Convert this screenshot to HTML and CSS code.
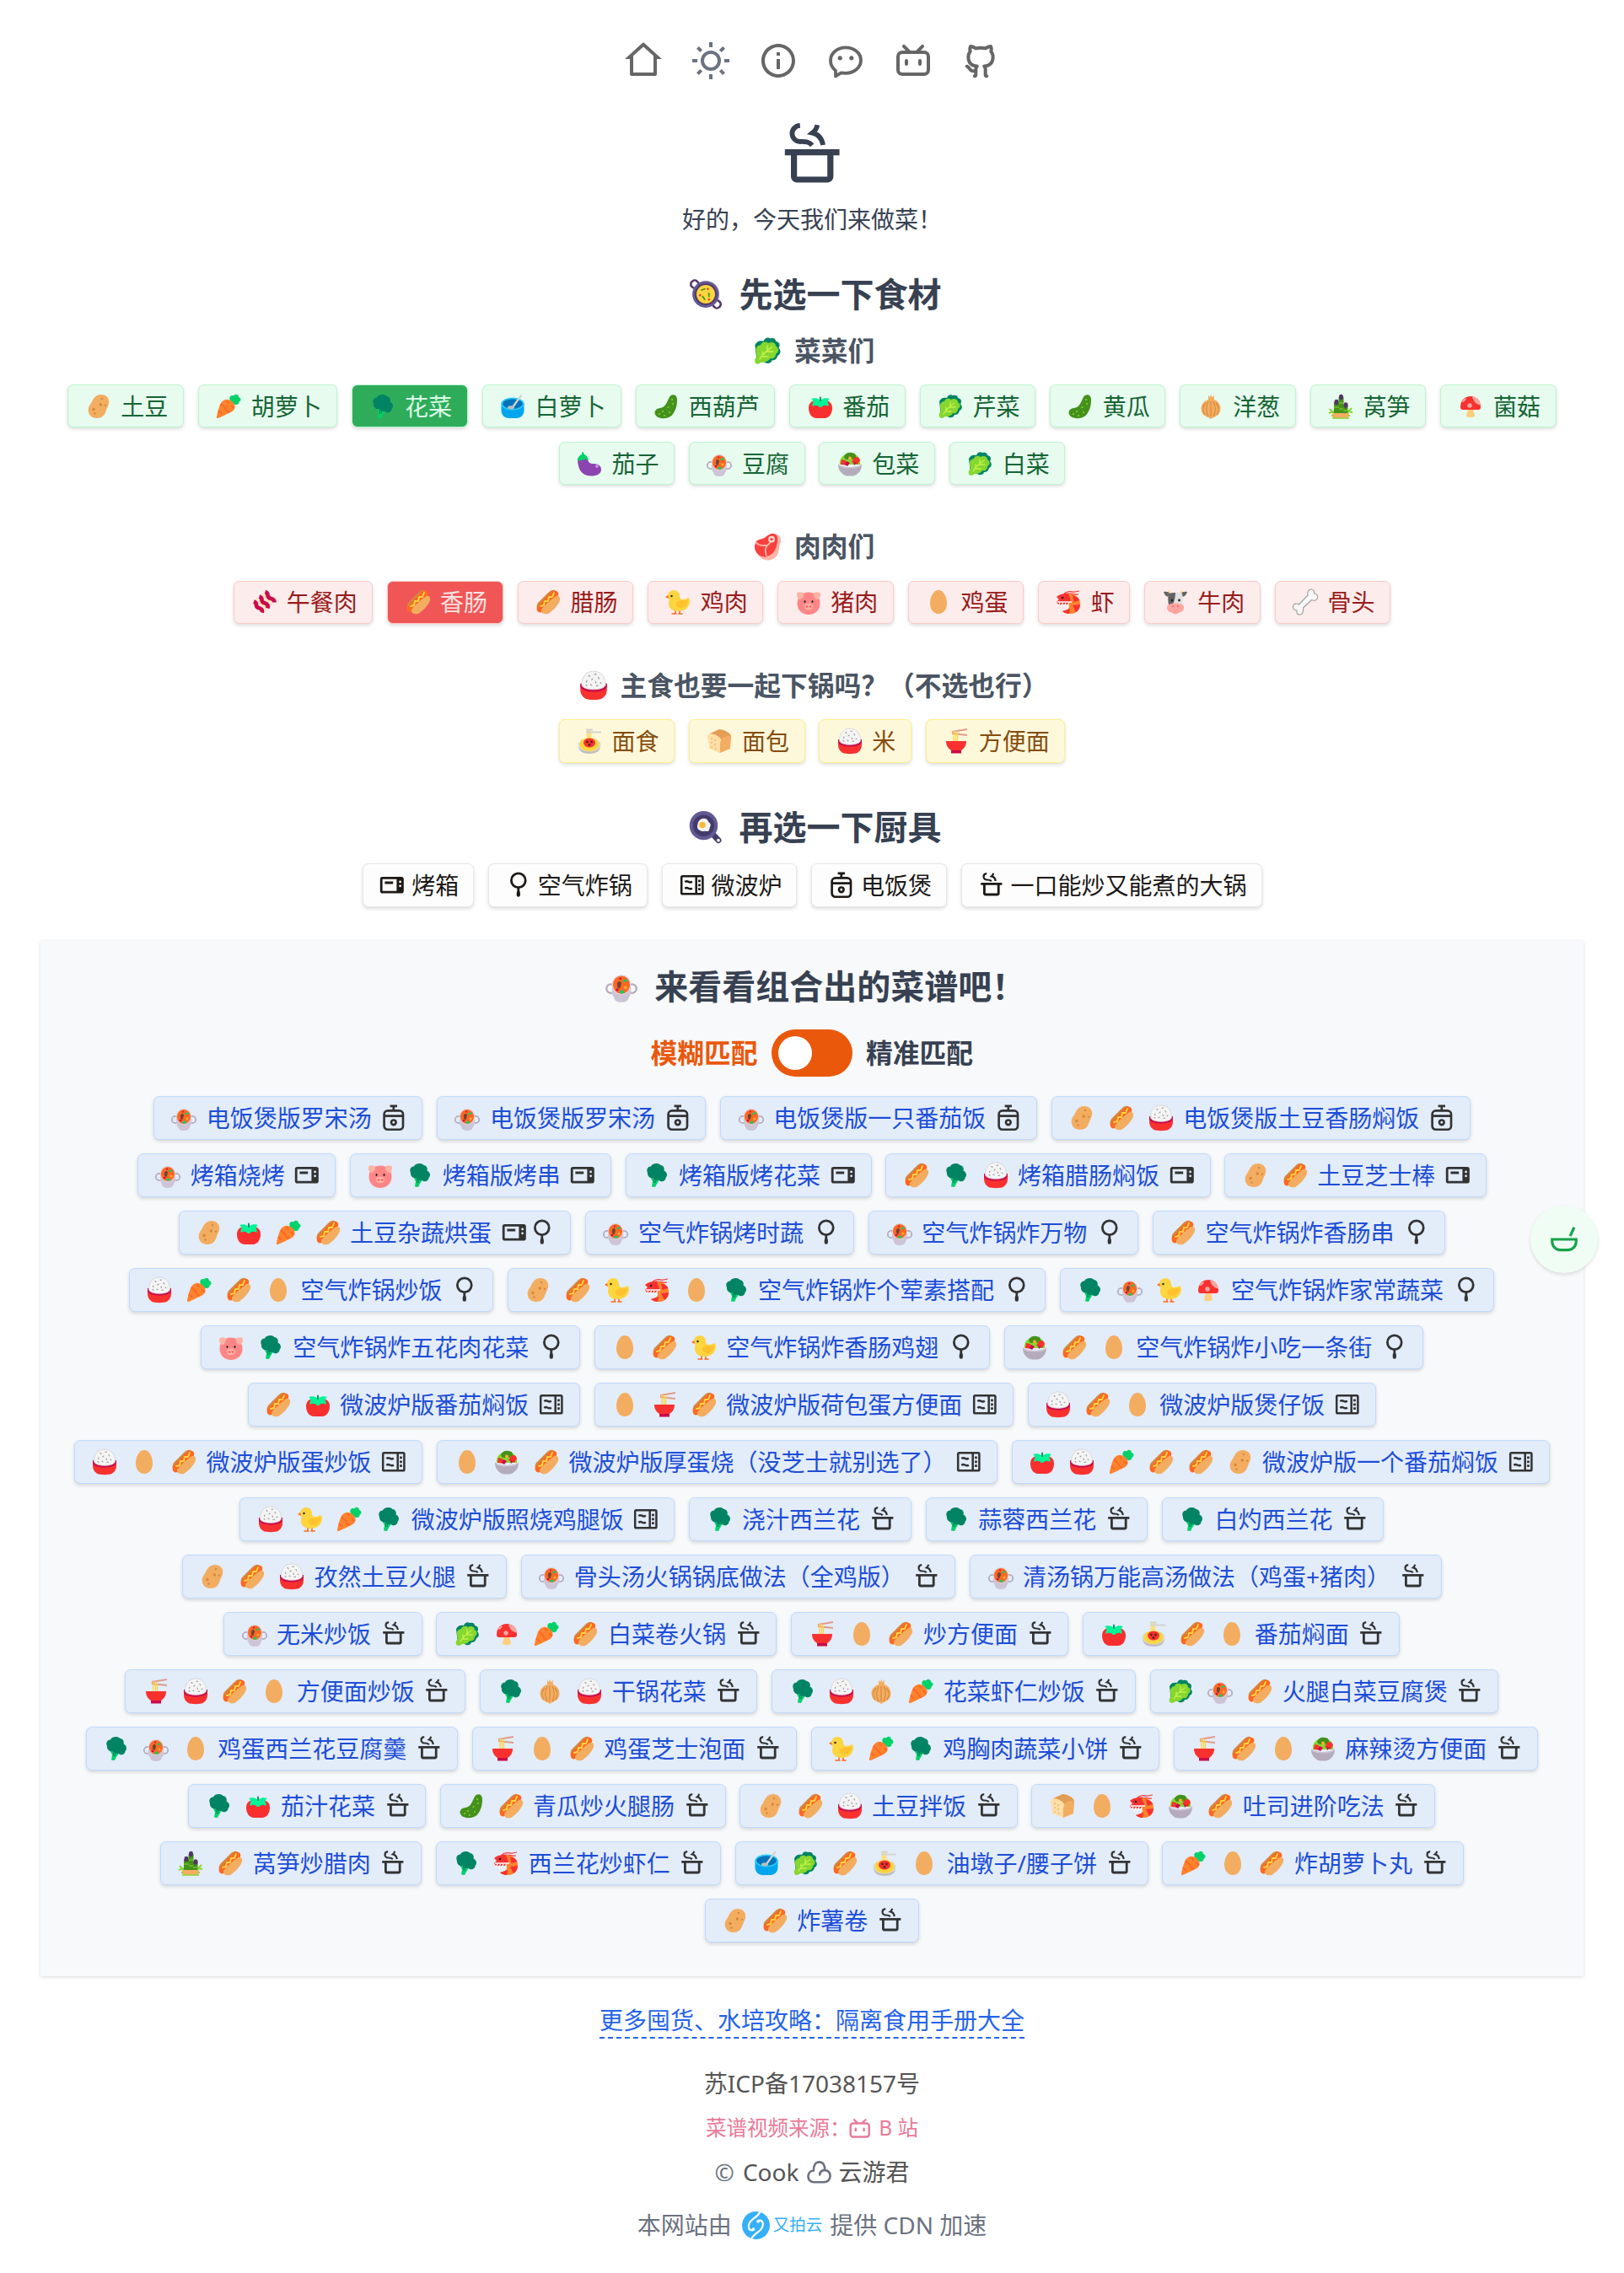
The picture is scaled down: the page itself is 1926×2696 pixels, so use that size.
FILE: index.html
```html
<!DOCTYPE html>
<html lang="zh-CN">
<head>
<meta charset="utf-8">
<title>好的，今天我们来做菜！</title>
<link rel="stylesheet" href="styles.css">
</head>
<body>
<svg class="sprite" aria-hidden="true">
  <symbol id="home" viewBox="0 0 24 24"><path fill="currentColor" d="M19 21H5a1 1 0 0 1-1-1v-9H1l10.327-9.388a1 1 0 0 1 1.346 0L23 11h-3v9a1 1 0 0 1-1 1zM6 19h12V9.158l-6-5.454-6 5.454V19z"/></symbol>
  <symbol id="sun" viewBox="0 0 24 24"><path fill="currentColor" d="M12 18a6 6 0 1 1 0-12 6 6 0 0 1 0 12zm0-2a4 4 0 1 0 0-8 4 4 0 0 0 0 8zM11 1h2v3h-2V1zm0 19h2v3h-2v-3zM3.515 4.929l1.414-1.414L7.05 5.636 5.636 7.05 3.515 4.93zM16.95 18.364l1.414-1.414 2.121 2.121-1.414 1.414-2.121-2.121zm2.121-14.85l1.414 1.415-2.121 2.121-1.414-1.414 2.121-2.121zM5.636 16.95l1.414 1.414-2.121 2.121-1.414-1.414 2.121-2.121zM23 11v2h-3v-2h3zM4 11v2H1v-2h3z"/></symbol>
  <symbol id="info" viewBox="0 0 24 24"><path fill="currentColor" d="M12 22C6.477 22 2 17.523 2 12S6.477 2 12 2s10 4.477 10 10-4.477 10-10 10zm0-2a8 8 0 1 0 0-16 8 8 0 0 0 0 16zM11 7h2v2h-2V7zm0 4h2v6h-2v-6z"/></symbol>
  <symbol id="wechat" viewBox="0 0 24 24"><path fill="none" stroke="currentColor" stroke-width="1.9" stroke-linejoin="round" d="M6 21.200V17.900C4.100 16.400 3 14.300 3 11.900 3 7.500 7 4.200 12 4.200s9 3.300 9 7.500-4 7.700-9 7.700c-1 0-1.800-.1-2.700-.2z"/><circle cx="8.600" cy="10.400" r="1.300" fill="currentColor"/><circle cx="15.400" cy="10.400" r="1.300" fill="currentColor"/></symbol>
  <symbol id="bili" viewBox="0 0 24 24"><path fill="currentColor" d="M7.172 2.757L10.414 6h3.171l3.243-3.242a1 1 0 1 1 1.415 1.415L16.414 6H18.500A3.500 3.500 0 0 1 22 9.500v8a3.500 3.500 0 0 1-3.500 3.500h-13A3.500 3.500 0 0 1 2 17.500v-8A3.500 3.500 0 0 1 5.500 6h2.085L5.757 4.171a1 1 0 0 1 1.415-1.415zM18.500 8h-13a1.500 1.500 0 0 0-1.493 1.356L4 9.500v8a1.500 1.500 0 0 0 1.356 1.493L5.500 19h13a1.500 1.500 0 0 0 1.493-1.355L20 17.500v-8A1.500 1.500 0 0 0 18.500 8zM8 11a1 1 0 0 1 1 1v2a1 1 0 0 1-2 0v-2a1 1 0 0 1 1-1zm8 0a1 1 0 0 1 1 1v2a1 1 0 0 1-2 0v-2a1 1 0 0 1 1-1z"/></symbol>
  <symbol id="github" viewBox="0 0 24 24"><path fill="currentColor" d="M5.883 18.653c-.3-.2-.558-.455-.86-.816a50.320 50.320 0 0 1-.466-.579c-.463-.575-.755-.84-1.057-.949a1 1 0 0 1 .676-1.883c.752.27 1.261.735 1.947 1.588-.094-.117.34.427.433.539.19.227.33.365.44.438.204.137.587.196 1.150.14.023-.382.094-.753.202-1.095C5.380 15.310 3.700 13.396 3.700 9.640c0-1.240.37-2.356 1.058-3.292-.218-.894-.185-1.975.302-3.192a1 1 0 0 1 .63-.582c.081-.024.127-.035.208-.047.803-.123 1.937.17 3.415 1.096A11.731 11.731 0 0 1 12 3.315c.912 0 1.818.104 2.684.308 1.477-.933 2.613-1.226 3.422-1.096.085.013.157.03.218.05a1 1 0 0 1 .616.58c.487 1.216.52 2.297.302 3.190.691.936 1.058 2.045 1.058 3.293 0 3.757-1.674 5.665-4.642 6.392.125.415.19.879.19 1.380a300.492 300.492 0 0 1-.012 2.716 1 1 0 0 1-.019 1.958c-1.139.228-1.983-.532-1.983-1.525l.002-.446.005-.705c.005-.708.007-1.338.007-1.998 0-.697-.183-1.152-.425-1.360-.661-.57-.326-1.655.54-1.752 2.967-.333 4.337-1.482 4.337-4.660 0-.955-.312-1.744-.913-2.404a1 1 0 0 1-.19-1.045c.166-.414.237-.957.096-1.614l-.01.003c-.491.139-1.110.44-1.858.949a1 1 0 0 1-.833.135A9.626 9.626 0 0 0 12 5.315c-.89 0-1.772.119-2.592.35a1 1 0 0 1-.83-.134c-.752-.507-1.374-.807-1.868-.947-.144.653-.073 1.194.092 1.607a1 1 0 0 1-.189 1.045C6.016 7.890 5.700 8.694 5.700 9.640c0 3.172 1.371 4.328 4.322 4.660.865.097 1.201 1.177.544 1.748-.192.168-.429.732-.429 1.364v3.150c0 .986-.835 1.725-1.960 1.528a1 1 0 0 1-.04-1.962v-.99c-.91.061-1.662-.088-2.254-.485z"/></symbol>
  <symbol id="pot" viewBox="0 0 24 24"><path fill="currentColor" fill-rule="evenodd" d="M3 10h18v2h-2v7a2 2 0 0 1-2 2H7a2 2 0 0 1-2-2v-7H3zM7 12v7h10v-7z"/><path fill="none" stroke="currentColor" stroke-width="1.600" d="M8 2.200C6.500 2.300 5.400 3.400 5.400 4.800c0 1.600 1.200 2.700 2.700 2.700 1.600 0 2.800-.1 3.900 1.200M13.700 2c-.2 1.100-.7 1.900-1.600 2.600 2 .4 3.100 1.900 3.500 4"/></symbol>
  <symbol id="oven" viewBox="0 0 24 24"><path fill="currentColor" fill-rule="evenodd" d="M4 5h16a2 2 0 0 1 2 2v10a2 2 0 0 1-2 2H4a2 2 0 0 1-2-2V7a2 2 0 0 1 2-2zM4 7v10h12V7zM19 8.200a1 1 0 1 0 0 2 1 1 0 0 0 0-2zM19 11.700a1 1 0 1 0 0 2 1 1 0 0 0 0-2z"/><path fill="currentColor" d="M6 9h7v2H6z"/></symbol>
  <symbol id="fryer" viewBox="0 0 24 24"><circle cx="12" cy="8" r="6" fill="none" stroke="currentColor" stroke-width="2"/><path d="M12 14v5" stroke="currentColor" stroke-width="2"/><rect x="10.500" y="17" width="3" height="5" rx="1.500" fill="currentColor"/></symbol>
  <symbol id="micro" viewBox="0 0 24 24"><g fill="none" stroke="currentColor" stroke-width="1.800"><rect x="3" y="4.500" width="18" height="15" rx="1"/><path d="M15.500 4.500v15M6 9.400c1-1 2-.8 3-.2s2 .6 3-.2M6 15c1-1 2-.8 3-.2s2 .6 3-.2"/></g><path fill="currentColor" d="M17.200 7.500h2v2h-2zM17.200 11h2v2h-2zM17.200 14.500h2v2h-2z"/></symbol>
  <symbol id="cooker" viewBox="0 0 24 24"><g fill="none" stroke="currentColor" stroke-width="1.900"><rect x="4" y="6" width="16" height="16" rx="3"/><path d="M4 10.500h16M12 6V2M9 2h6"/><circle cx="12" cy="15.900" r="2"/></g></symbol>
  <symbol id="bowlmix" viewBox="0 0 24 24"><path fill="none" stroke="currentColor" stroke-width="2" d="M3 12h18v1.500c0 4-3 6.500-6.500 6.500h-5C6 20 3 17.500 3 13.500zM16.500 9.500l3-6.500"/></symbol>
  <symbol id="cloud" viewBox="0 0 24 24"><path fill="none" stroke="currentColor" stroke-width="1.900" stroke-linecap="round" d="M7.200 10.600C7 6.500 8.700 3.200 12 3.200s5.300 3 4.800 6.900c2.800.4 4.700 2.400 4.700 5.200 0 3.100-2.300 5.200-5.300 5.200H7.500c-3 0-5-2-5-5 0-2.600 1.900-4.600 4.700-4.900M16.800 10.100c-2.600.2-4.200 1.700-4.300 4.100"/></symbol>
  <symbol id="upyun" viewBox="0 0 32 32"><circle cx="16" cy="16" r="16" fill="#35b0fb"/><g fill="none" stroke="#fff" stroke-width="2.200" stroke-linecap="round"><path d="M19 10.500c2-.6 4 .3 4.700 2.300 1 3-.6 7.700-4.600 10.400-3 2-6 3.800-8 7.800M12.500 21.500c-2 .6-4-.3-4.600-2.300-1-3 .6-7.700 4.600-10.400 3-2 6-3.800 8-7.800"/><circle cx="18.500" cy="11.500" r=".8"/><circle cx="13" cy="20.500" r=".8"/></g></symbol>

  <symbol id="potato" viewBox="0 0 32 32"><path fill="#F3AD61" d="M8.500 9.500C10.500 5 14 2 19 2c5.500 0 9.300 3.500 9.300 8.800 0 4-2.300 6.200-3.500 10.200C23 27 19.500 30 14 30 7.500 30 3.700 26 3.700 20.500c0-5 2.800-6.500 4.800-11z"/><g fill="#D3883E"><circle cx="20" cy="7" r="1.200"/><circle cx="18.300" cy="14" r="1.700"/><circle cx="24" cy="14.600" r="1.200"/><circle cx="10" cy="19.500" r="1.700"/><circle cx="11.500" cy="24.500" r="1.200"/></g></symbol>
  <symbol id="carrot" viewBox="0 0 32 32"><path fill="#00D26A" d="M18 9c-2-4 1-7 4-5.500 2-3 6-1.500 6 1.500 3.500 1 3 5 .5 5.500.5 3-3 4.500-5.500 3z"/><path fill="#FF822D" d="M7 12c3-5 9-6 13.500-1.500 5 4.500 3.500 9.500-1 12C15 24.800 9 28 3.500 30c-1.300.4-1.800-.4-1.500-1.500C3 23 5 15.500 7 12z"/><path fill="none" stroke="#FF6723" stroke-width="1.800" stroke-linecap="round" d="M7.500 13.500l5 5M14.500 10l1.500 2M22 18l-2.500-2.500M4.500 21.500l3 2.500M16 23l-3-3"/></symbol>
  <symbol id="broccoli" viewBox="0 0 32 32"><path fill="#00D26A" d="M8 18l12 2-4 6-2 4-4-.5 1-6.500z"/><path stroke="#008463" d="M12 21l1 4M15 21l-1 4"/><path fill="#008463" d="M5 13c-2-4 .5-7.500 4-7.500C10 2 17 .5 20.500 4c3.500.5 5 3.500 4 6.500 4 2 4.500 6 2 8.500 0 4-5.500 6-8.500 2.500-3 1-6 0-6.500-2.500-4 1-7-2.500-6.500-6z"/></symbol>
  <symbol id="radish" viewBox="0 0 32 32"><path fill="#00A6ED" d="M2.500 12h27v9c0 5-4 9-9 9h-9c-5 0-9-4-9-9z"/><ellipse cx="16" cy="13" rx="12.700" ry="6.600" fill="#0074BA" stroke="#26C9FC" stroke-width="1.600"/><path stroke="#D3D3D3" stroke-width="2.200" stroke-linecap="round" d="M26 3L16 17"/><ellipse cx="14" cy="17.300" rx="4" ry="2" fill="#BEBEBE"/></symbol>
  <symbol id="cucumber" viewBox="0 0 32 32"><path fill="#44911B" d="M20 5c2-4 9-4 9 3 0 5-.5 12-6 18.500C19 31 7 31.500 4 27c-4-5 1-9 5-9 7-1 8-8 11-13z"/><g fill="#86D72F"><circle cx="23" cy="8" r="1"/><circle cx="24" cy="13" r="1"/><circle cx="18.500" cy="17" r="1"/><circle cx="20" cy="23" r="1"/><circle cx="12" cy="22" r="1"/><circle cx="14" cy="27" r="1"/><circle cx="8" cy="25" r="1"/></g></symbol>
  <symbol id="tomato" viewBox="0 0 32 32"><path fill="#F92F2F" d="M2 18c0-7 5-10 14-10s14 3 14 10-4 12-9 12H11c-5 0-9-5-9-12z"/><path fill="#00F397" d="M15 8c-3-2-7-2-10-1 2 1 3 3 2 5-.7 1.500-1 3 0 4 2-2 4-1 5.500-1 1 0 1 2 3.500 2s2.500-2 3.500-2c1.500 0 3.500-1 5.500 1 1-1 .7-2.500 0-4-1-2 0-4 2-5-3-1-7-1-10 1z"/><path stroke="#008463" stroke-width="1.800" stroke-linecap="round" d="M16 9V5.500"/></symbol>
  <symbol id="leafy" viewBox="0 0 32 32"><path fill="#008463" d="M12 6c1-3 4-5 7-3 3-1 6 0 6 3 4 1 5 4 3 7 3 3 2 7-1 8-1 4-3 5-6 5-1 4-6 4-8 2L5 28 3 10c2-4 5-5 9-4z"/><path fill="#86D72F" d="M4 14c1-3 3-4 5-4 1-4 6-4 8-2 3-2 8-1 8 3 4 2 3 7 0 8 0 4-3 6-6 5-2 4-7 4-9 4-2 2-6 3-7 0-1-3 1-5 2-6-1-3-1-5-1-8z"/><path fill="none" stroke="#C3F04C" stroke-width="1.400" stroke-linecap="round" d="M8 25c3-5 7-9 13-13M16 11v6h6M11 17v5h6"/></symbol>
  <symbol id="onion" viewBox="0 0 32 32"><path fill="#F3AD61" d="M13 2.500l2 3 1-4 1.500 4L19.500 2.500 20 8c5 2 7.500 6 7.500 10.500 0 6-4 9.500-9 10.700L16 31l-2.500-1.800C8.500 28 4.500 24.500 4.500 18.500c0-4.500 3-8.500 8.500-10.500z"/><path fill="none" stroke="#D3883E" stroke-width="1.100" d="M16 10v18M13 10c-3 6-3 12 0 18M19 10c3 6 3 12 0 18M10 12c-4 4-4 9-1 14M22 12c4 4 4 9 1 14"/></symbol>
  <symbol id="bamboo" viewBox="0 0 32 32"><path fill="none" stroke="#86D72F" stroke-width="2" d="M2 24l6-2M3 19l5 5M30 23l-6-1M29 18l-5 5M5 27h5M27 27h-5"/><path fill="#44911B" d="M8 11h6v14H8zM13.500 5h6v20h-6zM19 14h5.500v11H19z"/><path stroke="#86D72F" stroke-width="1.200" d="M8 17h6M14 12h5M14 19h5M19 21h5"/><g fill="#533566"><ellipse cx="11" cy="11" rx="2.500" ry="3.200"/><ellipse cx="16.500" cy="5" rx="2.500" ry="3.200"/><ellipse cx="22" cy="14.500" rx="2.500" ry="3.200"/></g><path fill="#F3AD61" d="M6 24h20l-1 6H7z"/><path stroke="#86D72F" stroke-width="1.500" d="M6 30h20"/></symbol>
  <symbol id="mushroom" viewBox="0 0 32 32"><path fill="#FFCE7C" d="M13 19h6l2 8c0 1.500-1.500 2-5 2s-5-.5-5-2z"/><path fill="#F8312F" d="M4 17C4 9 9 4 16 4s12 5 12 13c0 2-1 3-3 3H7c-2 0-3-1-3-3z"/><path fill="#FFA6A0" d="M18 4.500c5 .5 9 4 10 9.500-4 1-9-4-10-9.500zM11 6c-.5 3-3 5-5.500 5C6 9 8.500 6.500 11 6z"/><circle cx="15" cy="15" r="2.700" fill="#FFA6A0"/></symbol>
  <symbol id="eggplant" viewBox="0 0 32 32"><path fill="#8C44B0" d="M2 10c4-3 9-3 12 1 1 4 3 5 7 5 6 0 9 3 9 7 0 5-5 7.500-12 7.500C8 30.500 2 24 2 10z"/><circle cx="25" cy="19" r="2" fill="#C890E0"/><path fill="#00D26A" d="M7 5c0-1 0-2.500 1-3 1.500 0 1 2 2 3 3 1 4 4 5 7-2 0-3-1-4-2-1 2-2 2-3 1-2 2-4 1.500-6 1 0-3 2-6 5-7z"/></symbol>
  <symbol id="hotpot" viewBox="0 0 32 32"><g fill="none" stroke="#B4ACBC" stroke-width="1.800"><circle cx="6" cy="18" r="4.200"/><circle cx="26" cy="18" r="4.200"/></g><path fill="#CDC4D6" d="M7 16h18v4c0 3-1 5-2 6.500-.6 3-3 4.500-7 4.500s-6.400-1.500-7-4.500c-1-1.500-2-3.500-2-6.500z"/><ellipse cx="16" cy="14.500" rx="8.600" ry="9" fill="#FF6723" stroke="#DED6E6"/><path fill="#6D4534" d="M12 13c1-3 4-2 4 0s-1 2-1 4-4 1-3-4z"/><path fill="#00D26A" d="M17 11l4-2 1 2-4 1zM14 21l3-2 2 3-3 1z"/><circle cx="20" cy="17" r="1.500" fill="#FFB02E"/><circle cx="12" cy="19" r="1.300" fill="#CA0B4A"/><circle cx="15" cy="8.500" r="1" fill="#CA0B4A"/></symbol>
  <symbol id="salad" viewBox="0 0 32 32"><path fill="#86D72F" d="M4 17C3 9 9 4 16 4s13 4 12 13z"/><path fill="#44911B" d="M9 7c2-4 6-5 9-4 4 0 6 3 5 6-2 2-5 2-7 1-3 2-7 1-7-3z"/><path fill="#F8312F" d="M21 9c3-2 6-1 7 3l-3 5-7-3zM6 11l5 1 2 6-8-1z"/><path fill="#CA0B4A" d="M12 13l4 2-3 4-3-2zM20 14l4 1-3 3z"/><circle cx="16" cy="9.500" r="2" fill="#FFB02E"/><path fill="#B4ACBC" d="M2 16c2 5.500 26 5.500 28 0 0 6-2 10-6 12.500-1.500 1.600-3 2-8 2s-6.500-.4-8-2c-4-2.500-6-6.500-6-12.500z"/><path fill="none" stroke="#CDC4D6" stroke-width="1.500" d="M2.700 17c2 5 24.600 5 26.600 0"/></symbol>
  <symbol id="bacon" viewBox="0 0 32 32"><g fill="none" stroke="#CA0B4A" stroke-width="4.800" stroke-linejoin="round"><path d="M4 15.500q3 1 3 4t4 4 2.500 5M10.500 9.500q3 1 3 4t4 4 3 6M17.500 4q3 1 3 4t4 4 4 4.500"/></g><g fill="none" stroke="#FFDEA7" stroke-width="1.500"><path d="M7 12q3.500 1 3.500 4t4 4 3 6.500M14 6.500q3.500 1 3.500 4t4 4 3 5.500"/></g></symbol>
  <symbol id="hotdog" viewBox="0 0 32 32"><path fill="#D3883E" d="M16 5c5-5 9-3 10-1L7 27c-4 0-6-5-3-10z"/><path fill="#FF6723" d="M19 5c3-3 8-3 9 0 1 3-1 5-3 7L10 27c-2 2-6 2-7-1s0-4 2-6z"/><path fill="#F3AD61" d="M24 10c4-3 7 0 6 4-1 5-10 14-14 16-4 1-8 0-8-4 0-3 12-13 16-16z"/><path fill="none" stroke="#FCD53F" stroke-width="2" stroke-linecap="round" stroke-linejoin="round" d="M23 5l-2 5-4 0-1 5-4 0-1 5-4 1"/></symbol>
  <symbol id="chick" viewBox="0 0 32 32"><path fill="none" stroke="#FF6723" stroke-width="1.600" stroke-linecap="round" d="M13 25v5M18 25v5M9 30h5M17 30h4"/><path fill="#FCD53F" d="M4 9c0-4 3-7 7-7s7 3 7 7c0 2 1 4 3 4 3 0 5-1 7-2 2 1 2.500 4 1.500 7-1 5-6 9-13 9C9 27 5 23 5 18c0-3 1-4 0-6-1-1-1-2-1-3z"/><path fill="#FFC22E" d="M14 17c4-4 9-2 14-3 0 6-5 10-9 9-3 0-6-3-5-6z"/><path fill="#FF6723" d="M4 8L1 10l4 2z"/><circle cx="8.500" cy="9" r="1.200" fill="#212121"/></symbol>
  <symbol id="pig" viewBox="0 0 32 32"><path fill="#FF8687" d="M16 4.500c8 0 13.500 5 13.500 13S24 31 16 31 2.500 25.500 2.500 17.500 8 4.500 16 4.500z"/><path fill="#FFB3A4" d="M2.500 5c2.500-1.500 6.500-.8 7.500 1 .8 2.700-1.500 6.500-4 7-2.700.5-5.200-4.500-3.500-8zM29.500 5c-2.500-1.500-6.500-.8-7.500 1-.8 2.700 1.500 6.500 4 7 2.700.5 5.200-4.500 3.500-8zM11 21.500c0-5 10-5 10 0s-10 5-10 0z"/><g fill="#212121"><ellipse cx="11.500" cy="15.500" rx="1" ry="1.600"/><ellipse cx="20.500" cy="15.500" rx="1" ry="1.600"/></g><g fill="#FF5765"><circle cx="14" cy="21.500" r="1.300"/><circle cx="18" cy="21.500" r="1.300"/></g></symbol>
  <symbol id="egg" viewBox="0 0 32 32"><path fill="#F3AD61" d="M16 2c6 0 10 8 10 15.500S22 30 16 30 6 25 6 17.500 10 2 16 2z"/></symbol>
  <symbol id="shrimp" viewBox="0 0 32 32"><path fill="none" stroke="#F8312F" stroke-width="1.200" d="M11 6c6-5 9-1 13-2s4-1 5-1M11 7c6-3 12 1 17 0"/><path fill="#FF822D" d="M14 6c9 0 16 4 16 12 0 7-4 12-11 12-5 0-8-1-10-3 4-1 8-2 8-6z"/><path fill="#F8312F" d="M2 10c3-3 8-4.500 14-4l3 8-3 5H4l-2-3 3-3zM21 8c4 1 7 3 8.500 6l-7 2zM30 19c0 4-2 7-5 9l-4-8zM17 30c-3 0-6-1-8-3l9-3z"/><path stroke="#fff" stroke-width="1.300" d="M6 17l-2 4M9.500 17l-2 5M13 17l-2 5M16.500 17l-2 5M3 16h17"/><circle cx="9" cy="11" r="1.300" fill="#212121"/></symbol>
  <symbol id="cow" viewBox="0 0 32 32"><path fill="#FFDE8A" d="M9 1c0 3 1 4 3 5l-3 2c-2-2-2-5 0-7zM23 1c0 3-1 4-3 5l3 2c2-2 2-5 0-7z"/><path fill="#636363" d="M2 4c3-1 7 0 8 3-1 4-6 4-8-3zM30 4c-3-1-7 0-8 3 1 4 6 4 8-3z"/><path fill="#E1E1E1" d="M8 6c4-2 12-2 16 0 1 5 1 10 0 16H8C7 16 7 11 8 6z"/><path fill="#636363" d="M8 6c3-1 6-1 8-1 0 5-1 9-3 14H8C7 14 7 10 8 6z"/><g fill="#212121"><circle cx="12" cy="14" r="1.400"/><circle cx="20.500" cy="14" r="1.400"/></g><path fill="#FFA6A0" d="M6 22c0-6 20-6 20 0s-4 6-7 7c-1 2-5 2-6 0-3-1-7-1-7-7z"/><g fill="#FF5765"><circle cx="13" cy="21" r="1"/><circle cx="19" cy="21" r="1"/></g></symbol>
  <symbol id="bone" viewBox="0 0 32 32"><path fill="#f8f8f8" stroke="#9b9b9b" stroke-width="1.100" d="M19 8c-1-4 1-7 4-7s4 2 3.500 5c3 0 4.500 2 4 5-.6 3-4 4-7 2.500L13.500 23c1 4-1 8-4 8s-4-2-3.500-5c-3 0-5-2-4.500-5s4-4 7-2z"/></symbol>
  <symbol id="meat" viewBox="0 0 32 32"><path fill="#FFB3A4" d="M18 4c8-4 14 2 12 8-2 4-1 7-3 12-2 5-9 8-14 6-7-2-10-9-7-14z"/><path fill="#F8403F" d="M3 14C4 8 9 9 13 7c4-3 7-6 11-4s3 7 2 11c-1 8-7 13-13 13S1 21 3 14z"/><path fill="none" stroke="#FFB3A4" stroke-width="1.700" d="M4 12c4 4 7 3 12 3M16 15c-3 3-2 7-1 11M16 15c2-1 3-3 4-5"/><circle cx="20.500" cy="8.500" r="2.500" fill="#F8403F" stroke="#FFDCD4" stroke-width="2"/></symbol>
  <symbol id="rice" viewBox="0 0 32 32"><path fill="#F8312F" d="M2 14.500h28V20c0 5.500-2.500 8-5.500 10-2.500 1.500-14.500 1.500-17 0C4.500 28 2 25.500 2 20z"/><path fill="#CA0B4A" d="M2 14h28v3c-1 7.500-27 7.500-28 0z"/><path fill="#F4F4F4" stroke="#D3D3D3" stroke-width=".8" d="M3.500 15C3.500 6.500 8.500 1 16 1s12.500 5.500 12.500 14c0 7-25 7-25 0z"/><path stroke="#9b9b9b" stroke-width="1.100" stroke-linecap="round" d="M11 5.500l1 1M17 4.500l1.500-.6M21 7.500l.6 1.500M14 10l1-1M9 11l-.6 1.500M18 12l.5 1.500M23 13l1 .7M13 15l1 .7M19 16.500l1.500-.4M8 15.500l1 .7"/></symbol>
  <symbol id="pasta" viewBox="0 0 32 32"><path fill="#BEBEBE" d="M3 22c0 5 4 9 13 9s13-4 13-9z"/><ellipse cx="16" cy="20.500" rx="13.500" ry="8" fill="#D9D9D9"/><ellipse cx="16" cy="20" rx="11.500" ry="8" fill="#FCD53F"/><path fill="#F9E27A" d="M13 3h5l1 13h-7z"/><path stroke="#D3D3D3" stroke-width="2" d="M12 2.500h8M12 5.500h18"/><ellipse cx="16" cy="18" rx="7" ry="5.500" fill="#F8312F"/><g fill="#5a2020"><circle cx="13.500" cy="17" r="1.400"/><circle cx="18.500" cy="17" r="1.400"/><circle cx="16" cy="20.500" r="1.400"/></g></symbol>
  <symbol id="bread" viewBox="0 0 32 32"><path fill="#E39D55" d="M5 7l11-5c5 0 14 4 14 9l-1 12-13 7z"/><path fill="#F3AD61" d="M17 14c4-3 8-5 12.500-4L29 25l-12 5z"/><path fill="#FFDEA7" d="M2 10c1-4 8-3 12 0 4 2 5 5 3 8v12L4 25l-.5-10C2 14 1.500 12 2 10z"/><g fill="#E39D55"><circle cx="7" cy="13" r=".8"/><circle cx="11" cy="15" r=".8"/><circle cx="7" cy="18" r=".8"/><circle cx="11" cy="20" r=".8"/><circle cx="7" cy="23" r=".8"/><circle cx="12" cy="25" r=".8"/></g></symbol>
  <symbol id="noodles" viewBox="0 0 32 32"><path stroke="#E39A8A" stroke-width="2" d="M11 5l18-3M11 7l18 2"/><path fill="none" stroke="#FCD53F" stroke-width="1.300" d="M13 4v14M15.500 4v14M17.500 6v12"/><path fill="#CA0B4A" d="M10 26h12v4.500H10z"/><path fill="#F8312F" d="M4 16h24c0 6-3 9-6 11H10c-3-2-6-5-6-11z"/></symbol>
  <symbol id="paella" viewBox="0 0 32 32"><g fill="none" stroke="#533566" stroke-width="2"><rect x="2" y="3" width="7" height="7" rx="3" transform="rotate(-45 5.500 6.500)"/><rect x="23" y="22" width="7" height="7" rx="3" transform="rotate(-45 26.500 25.500)"/></g><circle cx="16" cy="16" r="12.700" fill="#635994"/><circle cx="16" cy="16" r="10.300" fill="#533566"/><circle cx="16" cy="16" r="8.800" fill="#FCD53F"/><g stroke="#44911B" stroke-width="1.400" stroke-linecap="round"><path d="M12 12l3-1M19 15l0 3M13 18l2 3"/></g><g fill="#F8312F"><circle cx="18" cy="11" r="1"/><circle cx="10.500" cy="17" r="1"/><circle cx="19" cy="21" r="1"/></g></symbol>
  <symbol id="pan" viewBox="0 0 32 32"><path stroke="#433B6B" stroke-width="5.500" stroke-linecap="round" d="M22 22l6 6.500"/><circle cx="28" cy="28.500" r="1.500" fill="#fff"/><ellipse cx="14" cy="14.500" rx="13.400" ry="13.700" fill="#635994"/><circle cx="14" cy="14.500" r="10.200" fill="#433B6B"/><path fill="#F4F4F4" d="M9 11c2-4 8-4 9-1 1 2 4 3 2 6-1 2 0 4-3 4-3-1-4 1-7-1s-2-5-1-8z"/><circle cx="12.800" cy="14" r="3" fill="#FBB836"/></symbol>
</svg>

<nav class="nav">
  <a class="nav-link"><svg><use href="#home"/></svg></a>
  <a class="nav-link nav-theme"><svg><use href="#sun"/></svg></a>
  <a class="nav-link"><svg><use href="#info"/></svg></a>
  <a class="nav-link"><svg><use href="#wechat"/></svg></a>
  <a class="nav-link"><svg><use href="#bili"/></svg></a>
  <a class="nav-link"><svg><use href="#github"/></svg></a>
</nav>

<main>
  <svg class="logo"><use href="#pot"/></svg>
  <p class="tagline">好的，今天我们来做菜！</p>

  <h1 class="title"><svg><use href="#paella"/></svg>先选一下食材</h1>
  <h2 class="subtitle"><svg><use href="#leafy"/></svg>菜菜们</h2>
  <div class="chips" data-kind="veg"></div>
  <h2 class="subtitle"><svg><use href="#meat"/></svg>肉肉们</h2>
  <div class="chips" data-kind="meat"></div>
  <h2 class="subtitle"><svg><use href="#rice"/></svg>主食也要一起下锅吗？（不选也行）</h2>
  <div class="chips" data-kind="staple"></div>

  <h1 class="title title-tools"><svg><use href="#pan"/></svg>再选一下厨具</h1>
  <div class="chips" data-kind="tool"></div>

  <section class="panel">
    <h1 class="title"><svg><use href="#hotpot"/></svg>来看看组合出的菜谱吧！</h1>
    <div class="switch-row">
      <span class="switch-on">模糊匹配</span>
      <span class="switch"><span class="knob"></span></span>
      <span>精准匹配</span>
    </div>
    <div class="recipes"></div>
  </section>
</main>

<footer class="footer">
  <a class="more">更多囤货、水培攻略：隔离食用手册大全</a>
  <p class="icp">苏ICP备17038157号</p>
  <p class="source">菜谱视频来源：<svg><use href="#bili"/></svg><span>B 站</span></p>
  <p class="copy"><span class="muted">©</span><span class="name">Cook</span><svg><use href="#cloud"/></svg><span>云游君</span></p>
  <p class="cdn"><span>本网站由</span><svg><use href="#upyun"/></svg><span class="upyun">又拍云</span><span>提供 CDN 加速</span></p>
</footer>

<a class="fab"><svg><use href="#bowlmix"/></svg></a>
<script src="app.js"></script>
</body>
</html>
```
FILE: styles.css
```css
* { box-sizing: border-box; }

body {
  margin: 0;
  background: #fff;
  color: #374151;
  font-family: "Noto Sans", "Noto Sans CJK SC", sans-serif;
  font-size: 28px;
  font-weight: 400;
  line-height: 42px;
}

h1, h2, p { margin: 0; }
svg { display: block; flex: none; }
.sprite { position: absolute; width: 0; height: 0; }

.nav {
  display: flex;
  justify-content: center;
  gap: 32px;
  padding-top: 47.7px;
  color: #666;
}
.nav-link svg { width: 48px; height: 48px; }
.nav-theme { color: #6b7280; }

.logo { width: 86.4px; height: 86.4px; margin: 45.600px auto 0; }
.tagline { margin-top: 11.200px; text-align: center; }

.title, .subtitle {
  display: flex;
  justify-content: center;
  align-items: center;
  font-weight: 700;
}
.title { height: 48px; margin-top: 44.5px; font-size: 40px; line-height: 48px; }
.title svg { width: 40px; height: 40px; margin: 0 19.5px 0 7.5px; }
.title-tools { margin-top: 52.2px; }
.subtitle { height: 42px; margin-top: 52px; color: #4b5563; font-size: 31.75px; }
.subtitle svg { width: 36px; height: 36px; margin: 0 13.8px 0 3.3px; }
.title + .subtitle { margin-top: 21.2px; }

.chips, .row {
  display: flex;
  flex-wrap: wrap;
  justify-content: center;
  gap: 16.5px 16.9px;
}
.chips { padding: 0 60px; margin-top: 19.3px; }

.chip {
  display: flex;
  align-items: center;
  height: 51.5px;
  padding: 0 17.600px 0 11.900px;
  border: 1px solid;
  border-radius: 7px;
  box-shadow: 0 2px 4px rgba(0, 0, 0, .14);
  white-space: nowrap;
}
.chip .emoji { width: 32px; height: 32px; margin: 0 7.450px; }
.chip .label { margin-left: 3.100px; }
.chip .device { width: 33.6px; height: 33.6px; }

.veg { background: #e7fbef; border-color: #bbf7d0; color: #166534; }
.veg.selected { background: #2eac5a; color: #dcfce7; }
.meat { background: #fdecec; border-color: #fecaca; color: #991b1b; }
.meat.selected { background: #f05656; color: #fee2e2; }
.staple { background: #fef8db; border-color: #fef08a; color: #854d0e; }
.tool { background: #fdfdfd; border-color: #e5e7eb; color: #1c1917; padding: 0 16.900px 0 17.900px; }
.tool .label { margin-left: 6.300px; }
.recipe { background: #e3ecf9; border-color: #bfdbfe; color: #1d4ed8; padding-right: 16.300px; }
.recipe .label { margin-right: 9.600px; }
.recipe .device { color: #333; }

.panel {
  margin: 40.2px 48px 0 47.5px;
  padding: 30px 20px 39.9px;
  background: #f8f9fb;
  box-shadow: 0 1px 4px rgba(0, 0, 0, .14);
}
.panel .title { margin-top: 0; }
.switch-row {
  display: flex;
  justify-content: center;
  align-items: center;
  gap: 16px;
  height: 56px;
  margin-top: 26.7px;
  font-size: 31.75px;
  font-weight: 700;
}
.switch-on { color: #ea580c; }
.switch {
  display: flex;
  align-items: center;
  width: 96.5px;
  height: 56px;
  padding-left: 8px;
  border-radius: 28px;
  background: #ea580c;
}
.knob { width: 40px; height: 40px; border-radius: 50%; background: #fff; }
.recipes {
  display: flex;
  flex-direction: column;
  gap: 16.5px;
  margin-top: 23.6px;
}

.footer {
  display: flex;
  flex-direction: column;
  align-items: center;
  padding: 32.3px 0 35px;
  color: #555;
}
.footer p { display: flex; align-items: center; height: 42px; }
.more { height: 41.7px; line-height: 40px; border-bottom: 2px dashed #2563eb; color: #2563eb; }
.footer .icp { margin-top: 32.500px; }
.footer .source { margin-top: 11px; color: #e97b98; font-size: 24.5px; }
.source svg { width: 29.4px; height: 29.4px; margin: 0 7.5px 0 -3px; }
.footer .copy { margin-top: 10px; }
.muted, .copy svg, .cdn { color: #6b7280; }
.name { margin: 0 8px 0 10px; }
.copy svg { width: 33px; height: 33px; margin-right: 6px; }
.footer .cdn { margin-top: 21px; color: #6b7280; }
.cdn svg { width: 33px; height: 33px; margin: 0 4px 0 12px; }
.upyun { margin-right: 9px; color: #35b0fb; font-size: 19.5px; }

.fab {
  position: fixed;
  top: 1430px;
  right: 31px;
  display: flex;
  align-items: center;
  justify-content: center;
  width: 80px;
  height: 80px;
  border-radius: 50%;
  background: #f0fdf4;
  color: #16a34a;
  box-shadow: 0 2px 4px rgba(0, 0, 0, .12);
}
.fab svg { width: 38px; height: 38px; }
```
FILE: app.js
```js
const ingredients = {
  veg: ['potato 土豆', 'carrot 胡萝卜', 'broccoli 花菜 selected', 'radish 白萝卜', 'cucumber 西葫芦', 'tomato 番茄',
    'leafy 芹菜', 'cucumber 黄瓜', 'onion 洋葱', 'bamboo 莴笋', 'mushroom 菌菇', 'eggplant 茄子', 'hotpot 豆腐',
    'salad 包菜', 'leafy 白菜'],
  meat: ['bacon 午餐肉', 'hotdog 香肠 selected', 'hotdog 腊肠', 'chick 鸡肉', 'pig 猪肉', 'egg 鸡蛋', 'shrimp 虾',
    'cow 牛肉', 'bone 骨头'],
  staple: ['pasta 面食', 'bread 面包', 'rice 米', 'noodles 方便面'],
  tool: ['oven 烤箱', 'fryer 空气炸锅', 'micro 微波炉', 'cooker 电饭煲', 'pot 一口能炒又能煮的大锅'],
};

// Each recipe: ingredients | name | tools
const recipes = [
  ['hotpot|电饭煲版罗宋汤|cooker', 'hotpot|电饭煲版罗宋汤|cooker', 'hotpot|电饭煲版一只番茄饭|cooker', 'potato hotdog rice|电饭煲版土豆香肠焖饭|cooker'],
  ['hotpot|烤箱烧烤|oven', 'pig broccoli|烤箱版烤串|oven', 'broccoli|烤箱版烤花菜|oven', 'hotdog broccoli rice|烤箱腊肠焖饭|oven', 'potato hotdog|土豆芝士棒|oven'],
  ['potato tomato carrot hotdog|土豆杂蔬烘蛋|oven fryer', 'hotpot|空气炸锅烤时蔬|fryer', 'hotpot|空气炸锅炸万物|fryer', 'hotdog|空气炸锅炸香肠串|fryer'],
  ['rice carrot hotdog egg|空气炸锅炒饭|fryer', 'potato hotdog chick shrimp egg broccoli|空气炸锅炸个荤素搭配|fryer', 'broccoli hotpot chick mushroom|空气炸锅炸家常蔬菜|fryer'],
  ['pig broccoli|空气炸锅炸五花肉花菜|fryer', 'egg hotdog chick|空气炸锅炸香肠鸡翅|fryer', 'salad hotdog egg|空气炸锅炸小吃一条街|fryer'],
  ['hotdog tomato|微波炉版番茄焖饭|micro', 'egg noodles hotdog|微波炉版荷包蛋方便面|micro', 'rice hotdog egg|微波炉版煲仔饭|micro'],
  ['rice egg hotdog|微波炉版蛋炒饭|micro', 'egg salad hotdog|微波炉版厚蛋烧（没芝士就别选了）|micro', 'tomato rice carrot hotdog hotdog potato|微波炉版一个番茄焖饭|micro'],
  ['rice chick carrot broccoli|微波炉版照烧鸡腿饭|micro', 'broccoli|浇汁西兰花|pot', 'broccoli|蒜蓉西兰花|pot', 'broccoli|白灼西兰花|pot'],
  ['potato hotdog rice|孜然土豆火腿|pot', 'hotpot|骨头汤火锅锅底做法（全鸡版）|pot', 'hotpot|清汤锅万能高汤做法（鸡蛋+猪肉）|pot'],
  ['hotpot|无米炒饭|pot', 'leafy mushroom carrot hotdog|白菜卷火锅|pot', 'noodles egg hotdog|炒方便面|pot', 'tomato pasta hotdog egg|番茄焖面|pot'],
  ['noodles rice hotdog egg|方便面炒饭|pot', 'broccoli onion rice|干锅花菜|pot', 'broccoli rice onion carrot|花菜虾仁炒饭|pot', 'leafy hotpot hotdog|火腿白菜豆腐煲|pot'],
  ['broccoli hotpot egg|鸡蛋西兰花豆腐羹|pot', 'noodles egg hotdog|鸡蛋芝士泡面|pot', 'chick carrot broccoli|鸡胸肉蔬菜小饼|pot', 'noodles hotdog egg salad|麻辣烫方便面|pot'],
  ['broccoli tomato|茄汁花菜|pot', 'cucumber hotdog|青瓜炒火腿肠|pot', 'potato hotdog rice|土豆拌饭|pot', 'bread egg shrimp salad hotdog|吐司进阶吃法|pot'],
  ['bamboo hotdog|莴笋炒腊肉|pot', 'broccoli shrimp|西兰花炒虾仁|pot', 'radish leafy hotdog pasta egg|油墩子/腰子饼|pot', 'carrot egg hotdog|炸胡萝卜丸|pot'],
  ['potato hotdog|炸薯卷|pot'],
];

const icon = (name, cls) => `<svg class="${cls}"><use href="#${name}"/></svg>`;
const icons = (names, cls) => names.split(' ').map((n) => icon(n, cls)).join('');

document.querySelectorAll('.chips').forEach((box) => {
  const kind = box.dataset.kind;
  box.innerHTML = ingredients[kind].map((entry) => {
    const [name, label, state = ''] = entry.split(' ');
    return `<a class="chip ${kind} ${state}">${icon(name, kind === 'tool' ? 'device' : 'emoji')}<span class="label">${label}</span></a>`;
  }).join('');
});

document.querySelector('.recipes').innerHTML = recipes.map((row) => {
  const chips = row.map((entry) => {
    const [stuff, label, tools] = entry.split('|');
    return `<a class="chip recipe">${icons(stuff, 'emoji')}<span class="label">${label}</span>${icons(tools, 'device')}</a>`;
  });
  return `<div class="row">${chips.join('')}</div>`;
}).join('');
```
